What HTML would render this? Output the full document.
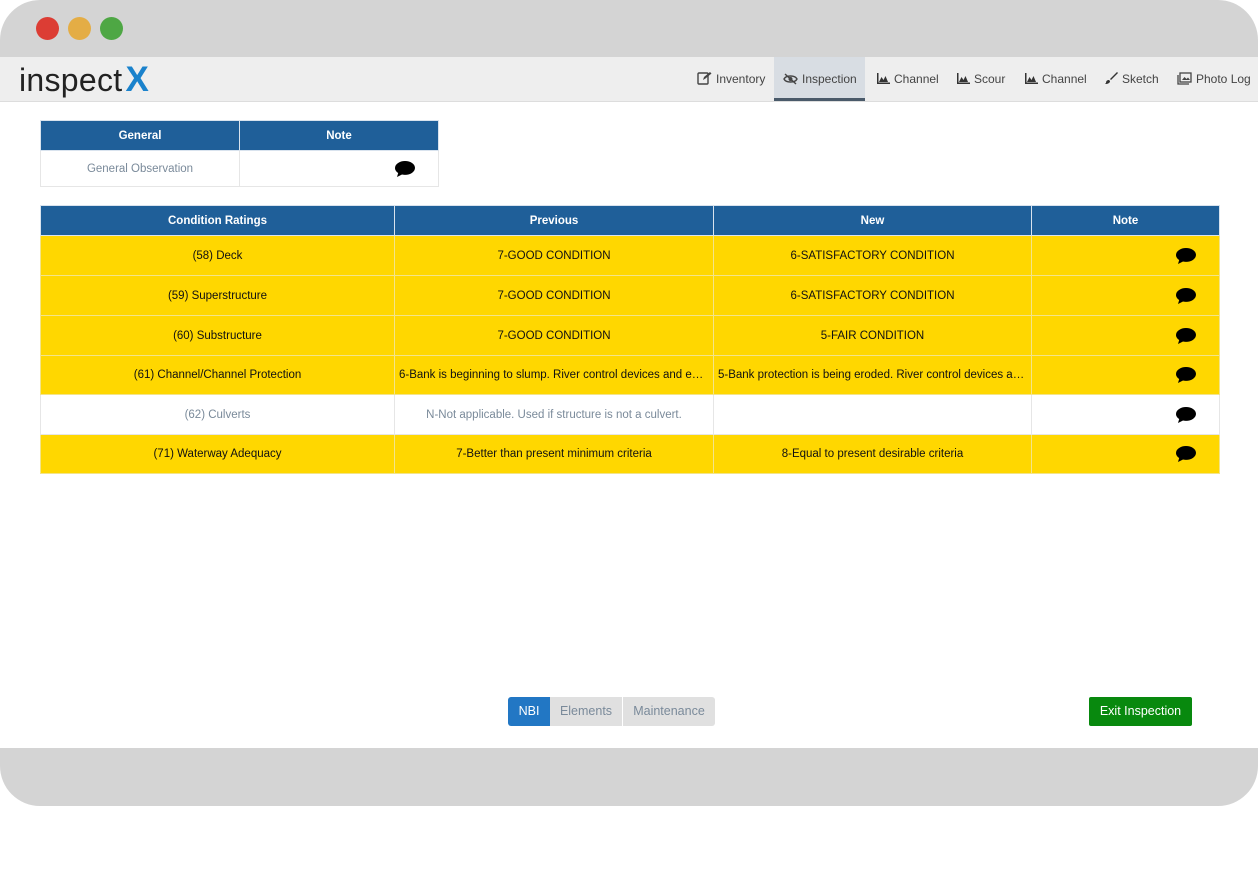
<!DOCTYPE html><html><head><style>
body{margin:0;width:1258px;height:890px;background:#fff;font-family:"Liberation Sans",sans-serif;position:relative;overflow:hidden}
.frame{position:absolute;left:0;top:0;width:1258px;height:806px;background:#d4d4d4;border-radius:40px;overflow:hidden}
.dot{position:absolute;top:17px;width:23px;height:23px;border-radius:50%}
.nav{position:absolute;left:0;top:57px;width:1258px;height:44px;background:#eeeeee;border-bottom:1px solid #ddd}
.content{position:absolute;left:0;top:102px;width:1258px;height:646px;background:#fff}
.logo{position:absolute;left:19px;top:60px;font-size:32px;color:#222;letter-spacing:0.3px}
.logo b{color:#1a82cc;font-size:35px;margin-left:3px}
.tab{position:absolute;top:0;height:44px;line-height:44px;font-size:12px;color:#444;white-space:nowrap}
.tab svg{vertical-align:-2px;margin-right:4px}
.tab.act{background:#d8dde3;border-bottom:3px solid #4a5a6a;box-sizing:border-box}
table{position:absolute;border-collapse:collapse;font-size:11.5px}
th{background:#1f5f99;color:#fff;font-weight:bold;border:1px solid #d9e3ee;height:29px;padding:0}
td{border:1px solid #e6e6e6;text-align:center;padding:0 4px;white-space:nowrap;overflow:hidden;text-overflow:ellipsis;color:#111}
tr.y td{background:#ffd700;border-color:#f3e48a}
tr.w td{color:#7a8a9a}
.bub{display:inline-block;float:right;margin-right:18px}
.btn{position:absolute;top:697px;height:29px;line-height:29px;font-size:12.5px;text-align:center}
</style></head><body>
<svg width="0" height="0" style="position:absolute"><defs>
<symbol id="b" viewBox="0 0 22 18"><path d="M11 1C5.5 1 1 4.2 1 8c0 2 1.2 3.8 3.2 5L3 17l5-2.5c1 .3 2 .4 3 .4 5.5 0 10-3.1 10-7S16.5 1 11 1z" fill="#000"/></symbol>
<symbol id="ch" viewBox="0 0 14 12"><path d="M1 0v11h13v-1.5H2.5V0z" fill="#333"/><path d="M3 9l2.5-5 2 3 2-4 2.5 6z" fill="#333"/></symbol>
</defs></svg>
<div class="frame">
<div class="dot" style="left:36px;background:#dc3d34"></div>
<div class="dot" style="left:68px;background:#e4ad45"></div>
<div class="dot" style="left:100px;background:#4ea744"></div>
<div class="nav">
<div class="tab" style="left:697px"><svg width="15" height="14" viewBox="0 0 15 14"><rect x="1" y="2" width="10" height="11" rx="1" fill="none" stroke="#444" stroke-width="1.4"/><path d="M6 9l1-3 6-5 1.5 1.5-6 5z" fill="#444"/></svg>Inventory</div>
<div class="tab act" style="left:774px;width:91px;padding-left:9px"><svg width="15" height="12" viewBox="0 0 15 12"><path d="M1 6c2-4 11-4 13 0-2 4-11 4-13 0z" fill="none" stroke="#444" stroke-width="1.4"/><circle cx="7.5" cy="6" r="2" fill="#444"/><path d="M2 1l11 10" stroke="#444" stroke-width="1.4"/></svg>Inspection</div>
<div class="tab" style="left:876px"><svg width="14" height="12"><use href="#ch"/></svg>Channel</div>
<div class="tab" style="left:956px"><svg width="14" height="12"><use href="#ch"/></svg>Scour</div>
<div class="tab" style="left:1024px"><svg width="14" height="12"><use href="#ch"/></svg>Channel</div>
<div class="tab" style="left:1104px"><svg width="14" height="14" viewBox="0 0 14 14"><path d="M13 1L6 8l1 1 7-7z M5 9c-2 0-3 1-3 3l-1 1c3 0 5-1 5-3z" fill="#333"/></svg>Sketch</div>
<div class="tab" style="left:1177px"><svg width="15" height="13" viewBox="0 0 15 13"><rect x="3" y="1" width="11" height="9" fill="none" stroke="#444" stroke-width="1.3"/><path d="M1 3v9h11" fill="none" stroke="#444" stroke-width="1.3"/><path d="M5 8l2.5-3 2 2 1.5-1.5 2 2.5z" fill="#444"/></svg>Photo Log</div>
</div>
<div class="logo">inspect<b>X</b></div>
<div class="content"></div>
</div>
<table style="left:40px;top:120px;width:399px">
<tr><th style="width:198px">General</th><th>Note</th></tr>
<tr class="w" style="height:36px"><td>General Observation</td><td><svg class="bub" width="22" height="18"><use href="#b"/></svg></td></tr>
</table>
<table style="left:40px;top:205px;width:1180px;table-layout:fixed">
<tr><th style="width:353px">Condition Ratings</th><th style="width:318px">Previous</th><th style="width:317px">New</th><th>Note</th></tr>
<tr class="y" style="height:40px"><td>(58) Deck</td><td>7-GOOD CONDITION</td><td>6-SATISFACTORY CONDITION</td><td><svg class="bub" width="22" height="18"><use href="#b"/></svg></td></tr>
<tr class="y" style="height:40px"><td>(59) Superstructure</td><td>7-GOOD CONDITION</td><td>6-SATISFACTORY CONDITION</td><td><svg class="bub" width="22" height="18"><use href="#b"/></svg></td></tr>
<tr class="y" style="height:40px"><td>(60) Substructure</td><td>7-GOOD CONDITION</td><td>5-FAIR CONDITION</td><td><svg class="bub" width="22" height="18"><use href="#b"/></svg></td></tr>
<tr class="y" style="height:39px"><td>(61) Channel/Channel Protection</td><td>6-Bank is beginning to slump. River control devices and embankment</td><td>5-Bank protection is being eroded.  River control devices and embankment</td><td><svg class="bub" width="22" height="18"><use href="#b"/></svg></td></tr>
<tr class="w" style="height:40px"><td>(62) Culverts</td><td>N-Not applicable. Used if structure is not a culvert.</td><td></td><td><svg class="bub" width="22" height="18"><use href="#b"/></svg></td></tr>
<tr class="y" style="height:39px"><td>(71) Waterway Adequacy</td><td>7-Better than present minimum criteria</td><td>8-Equal to present desirable criteria</td><td><svg class="bub" width="22" height="18"><use href="#b"/></svg></td></tr>
</table>
<div class="btn" style="left:508px;width:42px;background:#2277c4;color:#fff;border-radius:3px 0 0 3px">NBI</div>
<div class="btn" style="left:550px;width:72px;background:#e0e0e0;color:#7a8a9a">Elements</div>
<div class="btn" style="left:623px;width:92px;background:#e0e0e0;color:#7a8a9a;border-radius:0 3px 3px 0">Maintenance</div>
<div class="btn" style="left:1089px;width:103px;background:#08890e;color:#fff;border-radius:2px">Exit Inspection</div>
</body></html>
